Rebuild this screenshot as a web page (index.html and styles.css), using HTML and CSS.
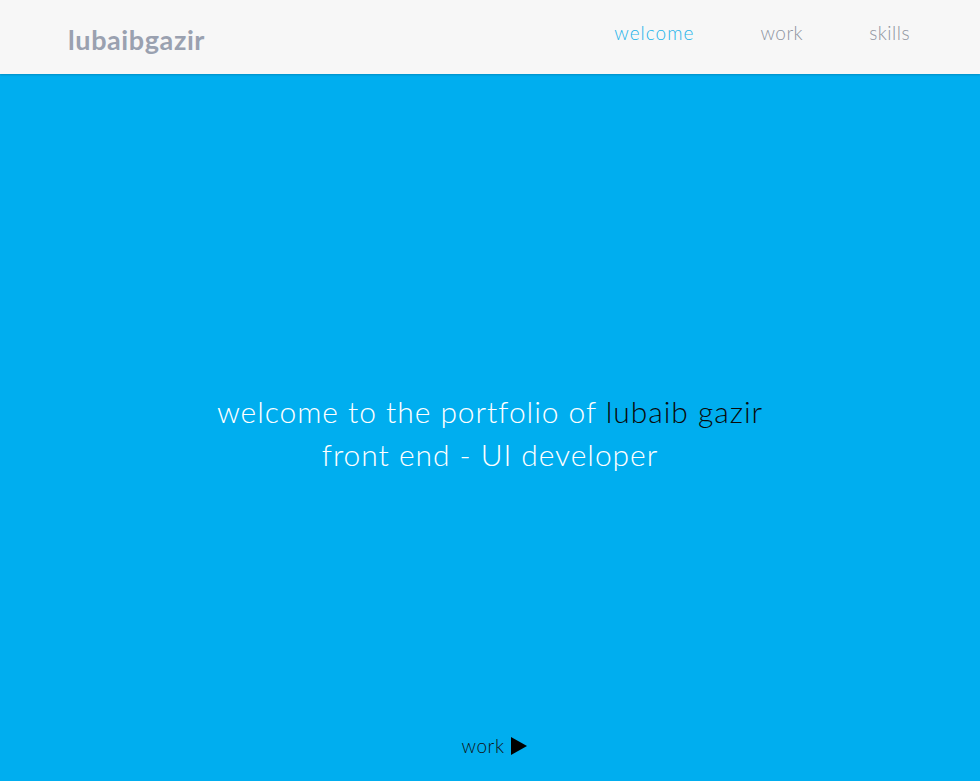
FILE: index.html
```html
<!DOCTYPE html>
<html>
<head>
<meta charset="utf-8">
<link rel="stylesheet" href="styles.css">
</head>
<body>
<header class="topbar">
  <div class="logo">lubaibgazir</div>
  <nav class="nav">
    <a class="nav-link active">welcome</a>
    <a class="nav-link">work</a>
    <a class="nav-link">skills</a>
  </nav>
</header>
<main class="hero">
  <div class="intro">
    <p class="line">welcome to the portfolio of <span class="name">lubaib gazir</span></p>
    <p class="line">front end - UI developer</p>
  </div>
  <a class="next">work <span class="arrow"></span></a>
</main>
</body>
</html>
```
FILE: styles.css
```css
html, body {
  margin: 0;
  padding: 0;
  height: 100%;
}
body {
  font-family: Lato, "Open Sans", sans-serif;
  background: #00aeef;
  overflow: hidden;
}
.topbar {
  height: 74px;
  background: #f7f7f7;
  display: flex;
  align-items: center;
  justify-content: space-between;
  padding: 0 70px 0 68px;
  box-shadow: 0 1px 2px rgba(0,0,0,0.18);
  position: relative;
  z-index: 1;
}
.logo {
  font-size: 27px;
  font-weight: 700;
  color: #9aa1b0;
  letter-spacing: 0.6px;
  margin-top: 4px;
}
.nav {
  display: flex;
  gap: 66px;
  margin-top: -10px;
}
.nav-link {
  font-size: 19px;
  font-weight: 300;
  color: #8e949f;
  letter-spacing: 0.5px;
}
.nav-link.active {
  color: #1fb4ea;
  letter-spacing: 1px;
}
.hero {
  height: calc(100% - 74px);
  display: flex;
  flex-direction: column;
  align-items: center;
  position: relative;
}
.intro {
  margin-top: 316px;
  text-align: center;
  color: #ffffff;
}
.line {
  margin: 0;
  font-size: 30px;
  font-weight: 300;
  line-height: 43px;
  letter-spacing: 0.95px;
}
.name {
  color: #0a0a0a;
}
.next {
  margin-top: auto;
  margin-bottom: 24px;
  margin-left: 8px;
  font-size: 19px;
  font-weight: 300;
  color: #111;
  display: flex;
  align-items: center;
  gap: 6px;
  letter-spacing: 0.6px;
}
.arrow {
  width: 0;
  height: 0;
  border-top: 9px solid transparent;
  border-bottom: 9px solid transparent;
  border-left: 16px solid #000;
}
```
